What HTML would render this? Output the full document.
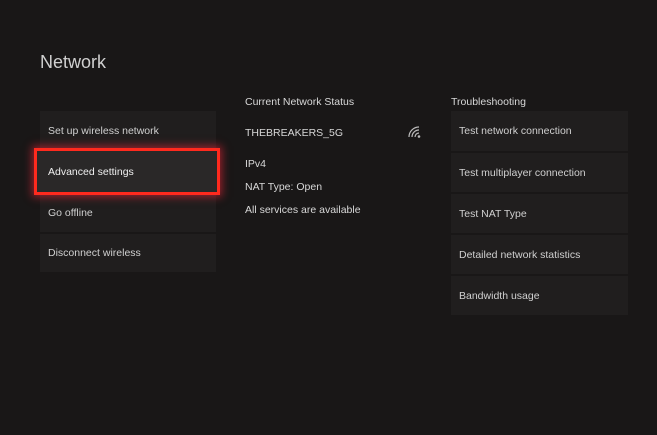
<!DOCTYPE html>
<html><head><style>
body{margin:0;width:657px;height:435px;background:#191717;font-family:"Liberation Sans",sans-serif;color:#ddd;position:relative;overflow:hidden}
.t{position:absolute;font-size:10.5px;color:#d8d8d8;white-space:nowrap}
.tile{position:absolute;background:#201e1e;}
.tile span{position:absolute;left:8px;top:50%;transform:translateY(-50%);font-size:10.5px;color:#d0d0d0;white-space:nowrap}
</style></head><body>
<div class="t" style="left:40px;top:52px;font-size:18px;color:#d0d0d0">Network</div>

<div class="tile" style="left:40px;top:111px;width:176px;height:39px"><span>Set up wireless network</span></div>
<div class="tile" style="left:40px;top:193px;width:176px;height:39px"><span>Go offline</span></div>
<div class="tile" style="left:40px;top:234px;width:176px;height:38px"><span>Disconnect wireless</span></div>
<div style="position:absolute;left:34px;top:148px;width:180px;height:41px;border:3px solid #ff2a1e;background:#2a2828;box-shadow:0 0 8px 2px rgba(255,40,60,.55)"><span style="position:absolute;left:11px;top:50%;transform:translateY(-50%);font-size:10.5px;color:#f0f0f0;white-space:nowrap">Advanced settings</span></div>

<div class="t" style="left:245px;top:96px">Current Network Status</div>
<div class="t" style="left:245px;top:127px">THEBREAKERS_5G</div>
<svg style="position:absolute;left:408px;top:126px" width="13" height="12" viewBox="0 0 13 12"><g fill="none" stroke="#bbb" stroke-width="1.2"><path d="M1 11A10 10 0 0 1 11 1"/><path d="M4 11A7 7 0 0 1 11 4"/><path d="M7 11A4 4 0 0 1 11 7"/></g><circle cx="11" cy="10.5" r="1.3" fill="#bbb"/></svg>
<div class="t" style="left:245px;top:158px">IPv4</div>
<div class="t" style="left:245px;top:181px">NAT Type: Open</div>
<div class="t" style="left:245px;top:204px">All services are available</div>

<div class="t" style="left:451px;top:96px">Troubleshooting</div>
<div class="tile" style="left:451px;top:111px;width:177px;height:40px"><span>Test network connection</span></div>
<div class="tile" style="left:451px;top:153px;width:177px;height:39px"><span>Test multiplayer connection</span></div>
<div class="tile" style="left:451px;top:194px;width:177px;height:39px"><span>Test NAT Type</span></div>
<div class="tile" style="left:451px;top:235px;width:177px;height:39px"><span>Detailed network statistics</span></div>
<div class="tile" style="left:451px;top:276px;width:177px;height:39px"><span>Bandwidth usage</span></div>
</body></html>
